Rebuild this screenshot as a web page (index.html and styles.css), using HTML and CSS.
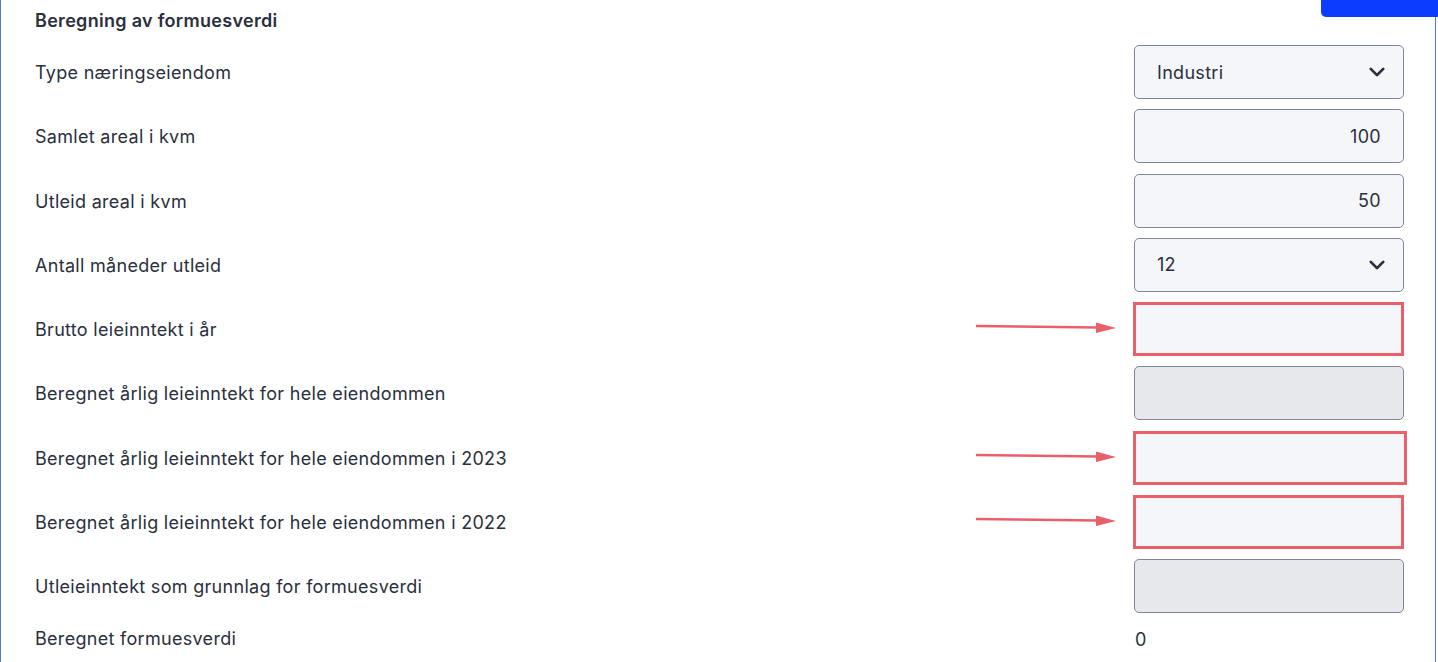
FILE: index.html
```html
<!DOCTYPE html>
<html lang="no">
<head>
    <meta charset="UTF-8">
    <meta name="viewport" content="width=device-width, initial-scale=1.0">
    <title>Beregning av formuesverdi</title>
    <link rel="stylesheet" href="styles.css">
</head>
<body>
    <div class="panel">
        <div class="top-tab"></div>
        <h2 class="title">Beregning av formuesverdi</h2>

        <div class="rows">
            <div class="row">
                <label for="type">Type næringseiendom</label>
                <div class="field">
                    <div class="select" id="type"><span>Industri</span><svg class="chev" viewBox="0 0 16 16"><path d="M3 5.5 8 10.5 13 5.5"/></svg></div>
                </div>
            </div>
            <div class="row">
                <label for="areal">Samlet areal i kvm</label>
                <div class="field"><input type="text" id="areal" class="num" value="100"></div>
            </div>
            <div class="row">
                <label for="utleid">Utleid areal i kvm</label>
                <div class="field"><input type="text" id="utleid" class="num" value="50"></div>
            </div>
            <div class="row">
                <label for="mnd">Antall måneder utleid</label>
                <div class="field">
                    <div class="select" id="mnd"><span>12</span><svg class="chev" viewBox="0 0 16 16"><path d="M3 5.5 8 10.5 13 5.5"/></svg></div>
                </div>
            </div>
            <div class="row">
                <label for="brutto">Brutto leieinntekt i år</label>
                <div class="field">
                    <svg class="arrow" viewBox="0 0 140 12"><path class="shaft" d="M0 5 L122 6.5"/><path class="head" d="M120 1.5 L140 7 L120 12 Z"/></svg>
                    <input type="text" id="brutto" class="marked">
                </div>
            </div>
            <div class="row">
                <label for="aarlig">Beregnet årlig leieinntekt for hele eiendommen</label>
                <div class="field"><input type="text" id="aarlig" disabled></div>
            </div>
            <div class="row">
                <label for="y2023">Beregnet årlig leieinntekt for hele eiendommen i 2023</label>
                <div class="field">
                    <svg class="arrow" viewBox="0 0 140 12"><path class="shaft" d="M0 5 L122 6.5"/><path class="head" d="M120 1.5 L140 7 L120 12 Z"/></svg>
                    <input type="text" id="y2023" class="marked wide">
                </div>
            </div>
            <div class="row">
                <label for="y2022">Beregnet årlig leieinntekt for hele eiendommen i 2022</label>
                <div class="field">
                    <svg class="arrow" viewBox="0 0 140 12"><path class="shaft" d="M0 5 L122 6.5"/><path class="head" d="M120 1.5 L140 7 L120 12 Z"/></svg>
                    <input type="text" id="y2022" class="marked">
                </div>
            </div>
            <div class="row">
                <label for="grunnlag">Utleieinntekt som grunnlag for formuesverdi</label>
                <div class="field"><input type="text" id="grunnlag" disabled></div>
            </div>
            <div class="row result">
                <span class="label">Beregnet formuesverdi</span>
                <div class="field"><span class="value">0</span></div>
            </div>
        </div>
    </div>
</body>
</html>
```

FILE: styles.css
```css
body {
    margin: 0;
    padding: 0;
    background-color: #ffffff;
    font-family: "Inter", "Noto Sans", sans-serif;
    color: #2a2f3d;
    overflow: hidden;
}
.panel {
    position: relative;
    width: 1436px;
    height: 662px;
    border-left: 1px solid #5076e6;
    border-right: 1px solid #5076e6;
    padding: 0 31px 0 34px;
    box-sizing: border-box;
}
.top-tab {
    position: absolute;
    top: 0;
    right: -3px;
    width: 117px;
    height: 17px;
    background-color: #0a3dfe;
    border-bottom-left-radius: 5px;
}
.title {
    margin: 0;
    padding-top: 9px;
    height: 36px;
    box-sizing: border-box;
    font-size: 18px;
    font-weight: 600;
    line-height: 24px;
    letter-spacing: 0.3px;
}
.rows {
    display: flex;
    flex-direction: column;
    gap: 10.25px;
    padding-top: 9px;
}
.row {
    display: flex;
    justify-content: space-between;
    align-items: center;
    height: 54px;
    font-size: 18px;
    letter-spacing: 0.3px;
}
.row label, .row .label {
    line-height: 22px;
    padding-top: 2px;
}
.field {
    position: relative;
    width: 270px;
}
input, .select {
    display: block;
    width: 100%;
    height: 54px;
    box-sizing: border-box;
    padding: 0 22px;
    border: 1px solid #80869a;
    border-radius: 5px;
    background-color: #f5f6fa;
    font-family: inherit;
    font-size: 18px;
    letter-spacing: 0.3px;
    color: #2a2f3d;
}
input.num {
    text-align: right;
}
input:disabled {
    background-color: #e7e8ec;
}
.select {
    display: flex;
    align-items: center;
    justify-content: space-between;
    padding-right: 16px;
}
.chev {
    width: 20px;
    height: 20px;
    fill: none;
    stroke: #2a2f3d;
    stroke-width: 2.2;
    stroke-linecap: round;
    stroke-linejoin: round;
}
/* markerte felt */
input.marked {
    border: 3px solid #e95f6a;
    border-radius: 0;
    margin-left: -1px;
    width: 271px;
}
input.marked.wide {
    width: 274px;
}
.arrow {
    position: absolute;
    left: -158px;
    top: 19px;
    width: 140px;
    height: 12px;
}
.arrow .shaft {
    stroke: #e95f6a;
    stroke-width: 2.4;
    fill: none;
}
.arrow .head {
    fill: #e95f6a;
}
.row.result {
    height: 30px;
}
.value {
    display: block;
    padding-left: 1px;
    padding-top: 2px;
}
```
